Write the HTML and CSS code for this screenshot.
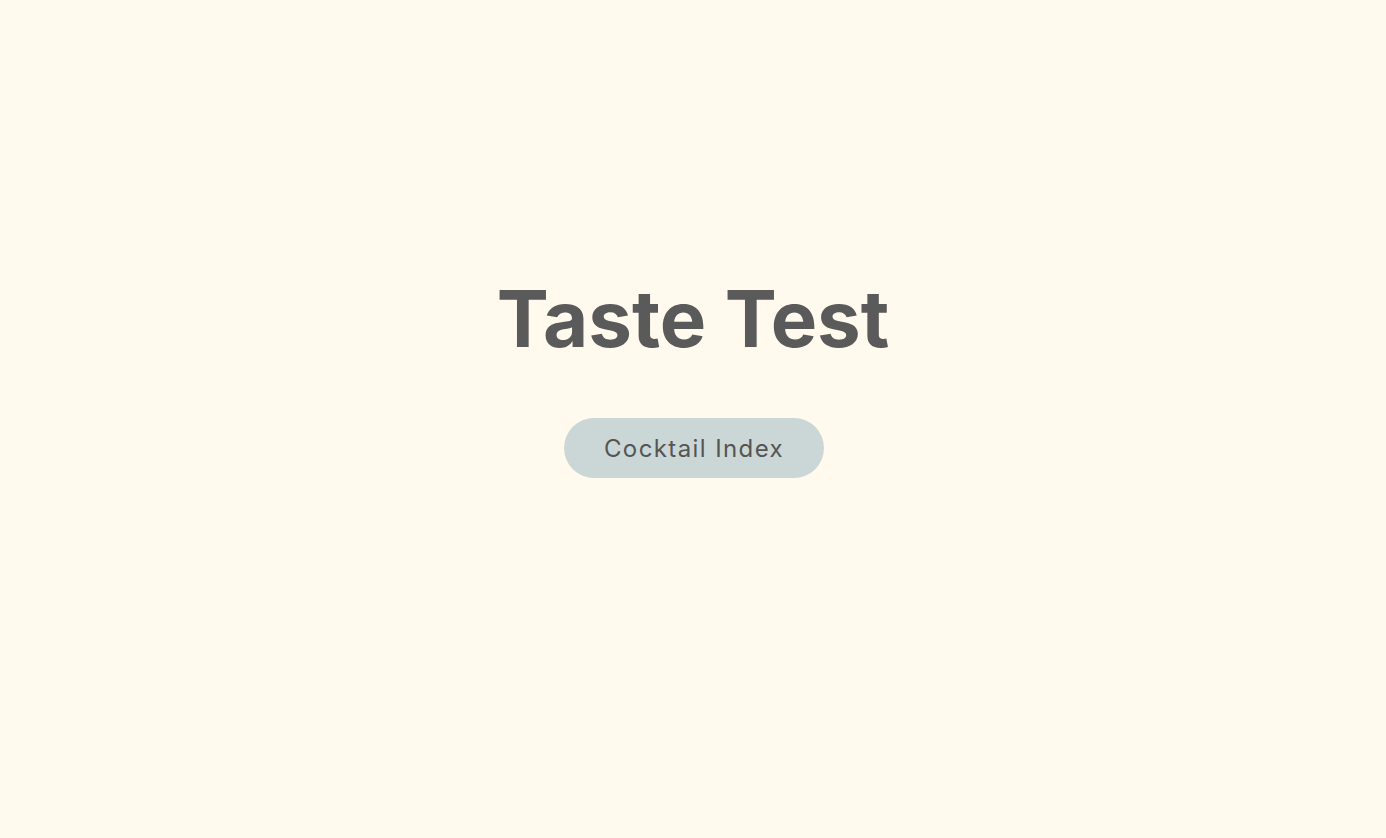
FILE: index.html
```html
<!DOCTYPE html>
<html lang="en">
<head>
<meta charset="utf-8">
<title>Taste Test</title>
<link rel="stylesheet" href="styles.css">
</head>
<body>
<main class="hero">
  <h1 class="hero-title">Taste Test</h1>
  <a class="hero-button" href="#">Cocktail Index</a>
</main>
</body>
</html>
```
FILE: styles.css
```css
html, body {
  margin: 0;
  padding: 0;
  background: #fffaed;
}
body {
  font-family: Inter, "Open Sans", sans-serif;
  color: #5a5a5a;
}
.hero {
  height: 838px;
  display: flex;
  flex-direction: column;
  align-items: center;
  padding-top: 269px;
  box-sizing: border-box;
}
.hero-title {
  margin: 0;
  font-size: 78px;
  font-weight: 700;
  line-height: 100px;
  color: #5a5a5a;
}
.hero-button {
  margin-top: 49px;
  margin-left: 2px;
  display: flex;
  align-items: center;
  justify-content: center;
  width: 260px;
  height: 60px;
  border-radius: 30px;
  background: #cbd7d6;
  color: #555555;
  font-size: 24px;
  letter-spacing: 1.4px;
  text-decoration: none;
}
```
